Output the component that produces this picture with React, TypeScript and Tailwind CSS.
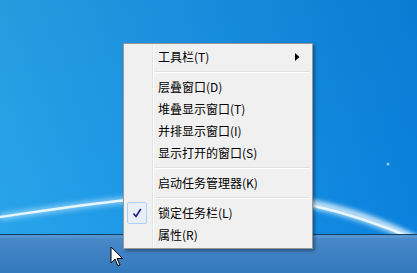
import React from "react";

type Item = { label: string; sep?: false; arrow?: boolean; checked?: boolean } | { sep: true };

const items: Item[] = [
  { label: "工具栏(T)", arrow: true },
  { sep: true },
  { label: "层叠窗口(D)" },
  { label: "堆叠显示窗口(T)" },
  { label: "并排显示窗口(I)" },
  { label: "显示打开的窗口(S)" },
  { sep: true },
  { label: "启动任务管理器(K)" },
  { sep: true },
  { label: "锁定任务栏(L)", checked: true },
  { label: "属性(R)" },
];

export default function App() {
  return (
    <div className="relative w-[417px] h-[273px] overflow-hidden bg-gradient-to-r from-[#28a4ea] via-[#1893e6] to-[#0b82dd] [font-family:'Noto_Sans_CJK_SC','Microsoft_YaHei',sans-serif]">
      {/* desktop swoosh */}
      <svg className="absolute inset-0" width="417" height="273" viewBox="0 0 417 273">
        <defs>
          <filter id="blur" x="-20%" y="-50%" width="140%" height="200%">
            <feGaussianBlur stdDeviation="2.5" />
          </filter>
          <linearGradient id="sky" x1="0" y1="0" x2="0" y2="1">
            <stop offset="0" stopColor="#000" stopOpacity="0.05" />
            <stop offset="1" stopColor="#000" stopOpacity="0" />
          </linearGradient>
        </defs>
        <rect x="0" y="0" width="417" height="234" fill="url(#sky)" />
        <path d="M0,217 C70,207 150,194 220,195 C280,196 340,207 417,240" fill="none" stroke="#bfe6ff" strokeWidth="7" opacity="0.6" filter="url(#blur)" />
        <path d="M300,201 C340,207 380,220 417,240" fill="none" stroke="#ffffff" strokeWidth="6" opacity="0.7" filter="url(#blur)" />
        <path d="M0,217 C70,207 150,194 220,195 C280,196 340,207 417,240" fill="none" stroke="#eef9ff" strokeWidth="2.4" opacity="0.95" />
        <circle cx="388" cy="164" r="1.5" fill="#bfe6ff" opacity="0.7" />
      </svg>

      {/* taskbar */}
      <div className="absolute left-0 right-0 top-[234px] bottom-0 border-t border-[#173c62] bg-gradient-to-b from-[#4a8ccb] to-[#3278bb]">
        <div className="h-[3px] bg-[#5d9bd6] opacity-60" />
      </div>

      {/* cursor */}
      <svg className="absolute left-[110px] top-[246px]" width="14" height="22" viewBox="0 0 14 22">
        <path d="M1,1 L1,17 L5,13 L8,20 L10,19 L7,12.5 L12.5,12.5 Z" fill="#fff" stroke="#000" strokeWidth="1" strokeLinejoin="round" />
      </svg>

      {/* context menu */}
      <div className="absolute left-[123px] top-[43px] w-[190px] border border-[#979797] bg-[#f0f0f0] p-[2px] shadow-[2px_2px_3px_rgba(0,0,0,0.35)]">
        <div className="absolute left-[28px] top-[2px] bottom-[2px] w-[2px] border-l border-[#e2e3e3] border-r border-r-white" />
        <div className="relative flex flex-col">
          {items.map((it, i) =>
            it.sep ? (
              <div key={i} className="h-[8px] flex flex-col justify-center pl-[29px]">
                <div className="h-[1px] bg-[#e0e0e0]" />
                <div className="h-[1px] bg-white" />
              </div>
            ) : (
              <div key={i} className="relative flex h-[22px] items-center pl-[32px] text-[12px] leading-none text-black">
                {it.checked && (
                  <div className="absolute left-[1px] top-0 flex h-[22px] w-[20px] items-center justify-center rounded-[2px] border border-[#aecff7] bg-[#e8eff9]">
                    <svg width="10" height="10" viewBox="0 0 10 10">
                      <path d="M1.5,5.5 L4,8.5 L8.8,1" fill="none" stroke="#1c1c7a" strokeWidth="1.6" />
                    </svg>
                  </div>
                )}
                <span>{it.label}</span>
                {it.arrow && (
                  <svg className="absolute right-[10px] top-[7px]" width="5" height="8" viewBox="0 0 5 8">
                    <path d="M0,0 L4.5,4 L0,8 Z" fill="#000" />
                  </svg>
                )}
              </div>
            )
          )}
        </div>
      </div>
    </div>
  );
}
